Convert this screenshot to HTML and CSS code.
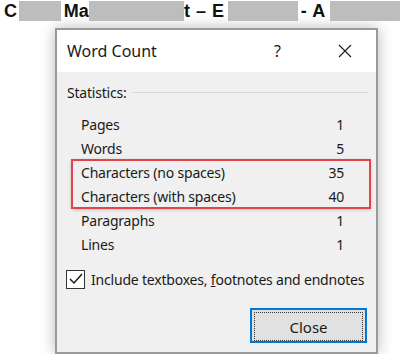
FILE: index.html
```html
<!DOCTYPE html>
<html lang="en">
<head>
    <meta charset="UTF-8">
    <title>Word Count</title>
    <link rel="stylesheet" href="styles.css">
</head>
<body>
    <div class="banner">
        <span>C</span><span class="blur blur-1"></span>
        <span>Ma</span><span class="blur blur-2"></span>
        <span class="tail">t – E</span><span class="blur blur-3"></span>
        <span class="tail">- A</span><span class="blur blur-4"></span>
    </div>

    <div class="dialog">
        <div class="titlebar">
            <span class="title">Word Count</span>
            <span class="help">?</span>
            <svg class="close-x" width="14" height="14" viewBox="0 0 14 14">
                <path d="M1 1 L13 13 M13 1 L1 13" stroke="#1a1a1a" stroke-width="1.1" fill="none"/>
            </svg>
        </div>

        <div class="body">
            <div class="group-label">
                <span>Statistics:</span>
                <span class="rule"></span>
            </div>

            <div class="stats">
                <div class="row"><span>Pages</span><span>1</span></div>
                <div class="row"><span>Words</span><span>5</span></div>
                <div class="highlight">
                    <div class="row"><span>Characters (no spaces)</span><span>35</span></div>
                    <div class="row"><span>Characters (with spaces)</span><span>40</span></div>
                </div>
                <div class="row"><span>Paragraphs</span><span>1</span></div>
                <div class="row"><span>Lines</span><span>1</span></div>
            </div>

            <label class="check">
                <span class="box">
                    <svg width="14" height="12" viewBox="0 0 14 12">
                        <path d="M1 6 L5 10 L13 1" stroke="#1a1a1a" stroke-width="1.5" fill="none"/>
                    </svg>
                </span>
                <span>Include textboxes, <u>f</u>ootnotes and endnotes</span>
            </label>

            <div class="actions">
                <button class="close-btn"><span class="focus">Close</span></button>
            </div>
        </div>
    </div>
</body>
</html>
```

FILE: styles.css
```css
body {
    margin: 0;
    background: #ffffff;
    font-family: "Noto Sans", "Open Sans", sans-serif;
    color: #1a1a1a;
    overflow: hidden;
}
.banner {
    display: flex;
    align-items: center;
    height: 22px;
    padding-left: 4px;
    font-family: "Liberation Sans", Arial, sans-serif;
    font-weight: bold;
    font-size: 18px;
    color: #111111;
    white-space: nowrap;
}
.blur {
    display: inline-block;
    height: 20px;
    background: #bdbdbd;
}
.blur-1 { width: 45px; margin: 0 3px 0 2px; }
.blur-2 { width: 103px; }
.blur-3 { width: 76px; margin: 0 3px; }
.blur-4 { width: 76px; margin-left: 4px; }
.tail {
    letter-spacing: 0.5px;
}
.dialog {
    margin: 6px 0 0 55px;
    width: 319px;
    border: 2px solid #9a9a9a;
    background: #f0f0f0;
    box-shadow: 0 0 14px rgba(0, 0, 0, 0.28);
}
.titlebar {
    display: flex;
    align-items: center;
    height: 42px;
    padding-left: 10px;
    background: #ffffff;
    font-size: 16px;
}
.title {
    flex: 1;
}
.help {
    width: 10px;
    margin-right: 54px;
    font-size: 16px;
}
.close-x {
    margin-right: 24px;
}
.body {
    padding: 10px 0 9px 0;
    font-size: 14px;
    letter-spacing: -0.2px;
}
.group-label {
    display: flex;
    align-items: center;
    height: 20px;
    padding: 0 8px 0 10px;
}
.rule {
    flex: 1;
    height: 1px;
    margin-left: 6px;
    background: #d8d8d8;
}
.stats {
    width: 298px;
    margin: 10px 0 0 15px;
}
.row {
    display: flex;
    justify-content: space-between;
    align-items: center;
    height: 24px;
    padding: 0 26px 0 9px;
}
.highlight {
    outline: 2px solid #e5434b;
    outline-offset: -1px;
    box-shadow: 0 1px 4px rgba(0, 0, 0, 0.3);
}
.check {
    display: flex;
    align-items: center;
    gap: 6px;
    margin: 14px 0 0 9px;
    height: 18px;
}
.box {
    display: flex;
    align-items: center;
    justify-content: center;
    width: 17px;
    height: 17px;
    border: 1px solid #333333;
    background: #ffffff;
}
.actions {
    display: flex;
    justify-content: flex-end;
    margin-top: 20px;
    padding-right: 9px;
}
.close-btn {
    width: 117px;
    height: 35px;
    padding: 2px;
    border: 2px solid #0078d7;
    background: #e1e1e1;
    font-family: inherit;
    font-size: 15px;
    color: #1a1a1a;
}
.focus {
    display: flex;
    align-items: center;
    justify-content: center;
    height: 100%;
    border: 1px dotted #333333;
}
```
